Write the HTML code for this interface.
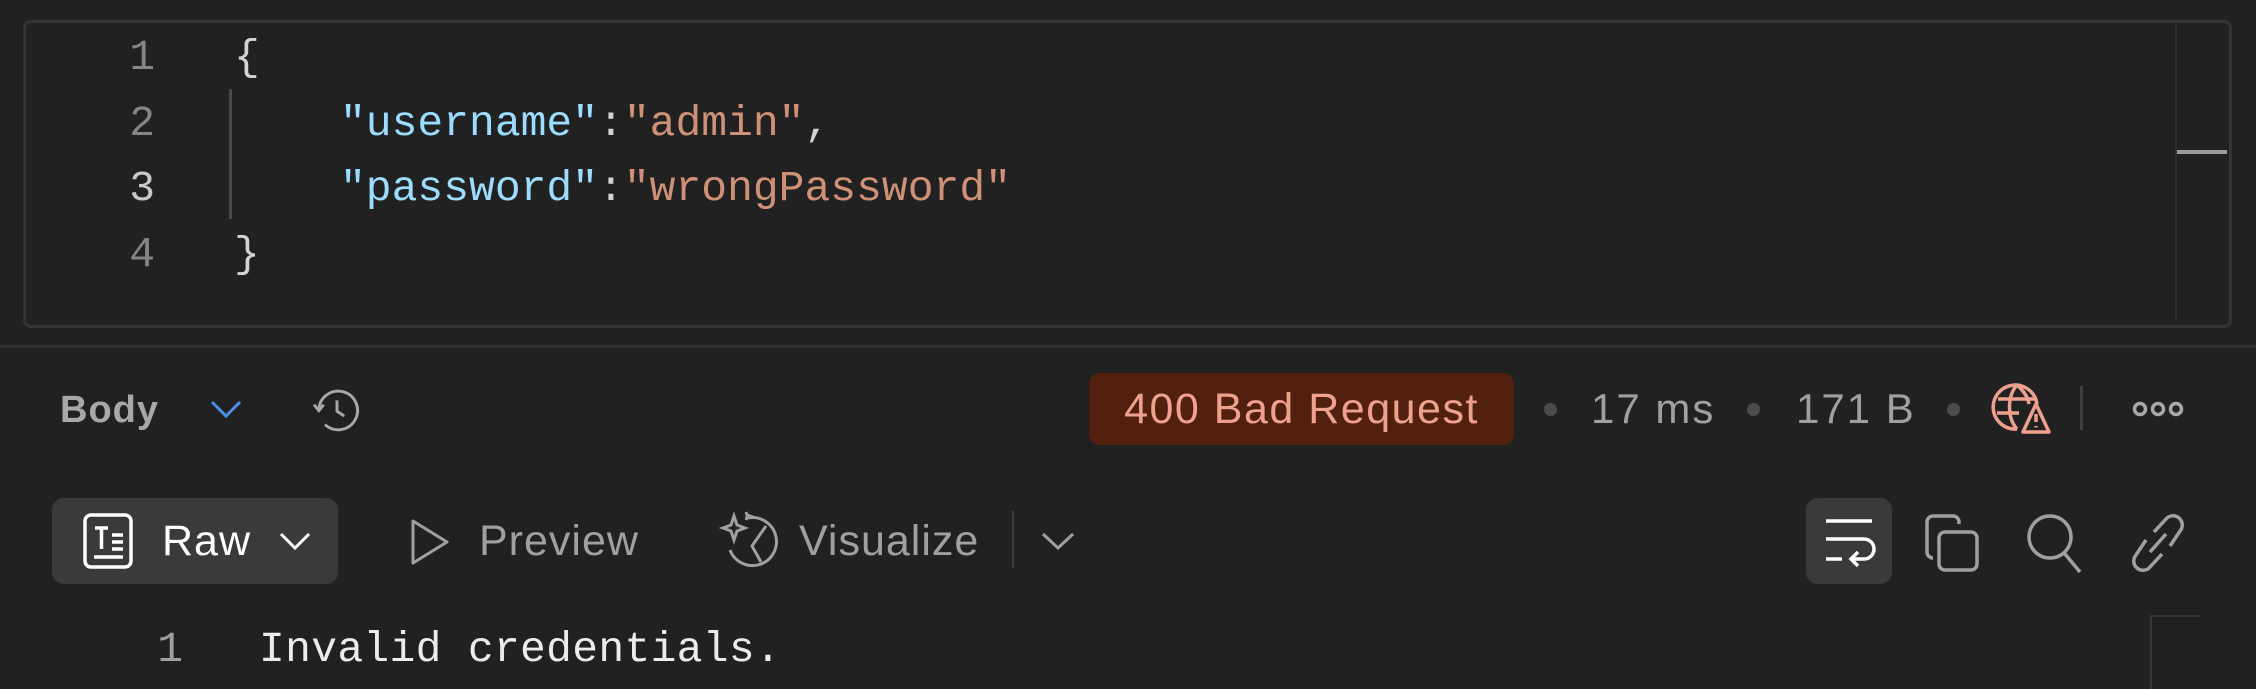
<!DOCTYPE html>
<html><head><meta charset="utf-8"><style>
html,body{margin:0;padding:0;background:#212121;width:2256px;height:689px;overflow:hidden;position:relative;font-family:"Liberation Sans",sans-serif}
.a{position:absolute}
.mono{font-family:"Liberation Mono",monospace;font-size:43px;line-height:66px;white-space:pre}
.ln{color:#858585;text-align:right;width:60px}
.s{font-size:40px;line-height:50px;white-space:nowrap;letter-spacing:1px}
svg{position:absolute;overflow:visible}
</style></head><body>
<div class="a" style="left:23px;top:20px;width:2203px;height:302px;border:3px solid #343434;border-radius:8px"></div>
<div class="a" style="left:2175px;top:23px;width:2px;height:299px;background:#2e2e2e"></div>
<div class="a" style="left:2177px;top:150px;width:50px;height:4px;background:#9a9a9a"></div>
<div class="a" style="left:229px;top:89px;width:3px;height:130px;background:#4a4a4a"></div>
<div class="a mono ln" style="left:95px;top:25px">1</div>
<div class="a mono ln" style="left:95px;top:91px">2</div>
<div class="a mono ln" style="left:95px;top:156px;color:#c8c8c8">3</div>
<div class="a mono ln" style="left:95px;top:222px">4</div>
<div class="a mono" style="left:234px;top:25px;color:#d4d4d4">{</div>
<div class="a mono" style="left:340px;top:91px"><span style="color:#9cdcfe">"username"</span><span style="color:#d4d4d4">:</span><span style="color:#ce9178">"admin"</span><span style="color:#d4d4d4">,</span></div>
<div class="a mono" style="left:340px;top:156px"><span style="color:#9cdcfe">"password"</span><span style="color:#d4d4d4">:</span><span style="color:#ce9178">"wrongPassword"</span></div>
<div class="a mono" style="left:234px;top:222px;color:#d4d4d4">}</div>
<div class="a" style="left:0;top:345px;width:2256px;height:3px;background:#2f2f2f"></div>

<div class="a s" style="left:60px;top:385px;color:#a8a8a8;font-weight:bold;font-size:38px">Body</div>
<svg style="left:209px;top:398px" width="34" height="22"><path d="M3 4 L17 18 L31 4" fill="none" stroke="#4b8fe6" stroke-width="3"/></svg>
<svg style="left:306px;top:381px" width="62" height="58" viewBox="0 0 24 24"><path d="M4.5 12 A8 8 0 1 1 7 18" fill="none" stroke="#a8a8a8" stroke-width="1.2"/><path d="M2.5 9.8 L4.5 12.3 L6.5 9.8" fill="none" stroke="#a8a8a8" stroke-width="1.2"/><path d="M12 8 V12.5 L15 14.5" fill="none" stroke="#a8a8a8" stroke-width="1.2"/></svg>

<div class="a" style="left:1089px;top:373px;width:425px;height:72px;background:#52200f;border-radius:11px"></div>
<div class="a s" style="left:1089px;top:384px;width:425px;text-align:center;color:#f0a18e;font-size:43px;letter-spacing:1.5px">400 Bad Request</div>
<div class="a" style="left:1544px;top:403px;width:13px;height:13px;border-radius:50%;background:#4a4a4a"></div>
<div class="a s" style="left:1591px;top:384px;color:#a0a0a0;font-size:42px;letter-spacing:2px">17 ms</div>
<div class="a" style="left:1747px;top:403px;width:13px;height:13px;border-radius:50%;background:#4a4a4a"></div>
<div class="a s" style="left:1796px;top:384px;color:#a0a0a0;font-size:42px;letter-spacing:2px">171 B</div>
<div class="a" style="left:1947px;top:403px;width:13px;height:13px;border-radius:50%;background:#4a4a4a"></div>
<svg style="left:1993px;top:382px" width="60" height="56" viewBox="0 0 60 56"><g fill="none" stroke="#ef9f8e" stroke-width="3.5"><path d="M44 22 A22 22 0 1 0 24 47"/><path d="M24 3 C14 14 14 36 24 47"/><path d="M24 3 C32 10 35 16 36 22"/><path d="M5 17 H43"/><path d="M4 31 H26"/><path d="M43 22 L56 50 H30 Z" stroke-linejoin="round"/><path d="M43 32 V40"/><path d="M43 44 V45.5"/></g></svg>
<div class="a" style="left:2080px;top:386px;width:3px;height:44px;background:#3e3e3e"></div>
<svg style="left:2132px;top:400px" width="52" height="18"><g fill="none" stroke="#a8a8a8" stroke-width="3.5"><circle cx="8" cy="9" r="5.5"/><circle cx="26" cy="9" r="5.5"/><circle cx="44" cy="9" r="5.5"/></g></svg>

<div class="a" style="left:52px;top:498px;width:286px;height:86px;background:#3a3a3a;border-radius:12px"></div>
<svg style="left:83px;top:513px" width="52" height="56" viewBox="0 0 52 56"><g fill="none" stroke="#fff" stroke-width="3.5"><rect x="2" y="2" width="46" height="52" rx="6"/><path d="M12 15 H25 M18.5 15 V36 M29 22 H40 M29 29 H40 M29 36 H40 M11 44 H40"/></g></svg>
<div class="a s" style="left:162px;top:516px;color:#fff;font-size:43px">Raw</div>
<svg style="left:278px;top:530px" width="34" height="22"><path d="M3 4 L17 18 L31 4" fill="none" stroke="#fff" stroke-width="3"/></svg>
<svg style="left:410px;top:518px" width="40" height="48"><path d="M3 3 L37 24 L3 45 Z" fill="none" stroke="#a0a0a0" stroke-width="3" stroke-linejoin="round"/></svg>
<div class="a s" style="left:479px;top:516px;color:#a0a0a0;font-size:43px">Preview</div>
<svg style="left:718px;top:510px" width="62" height="62" viewBox="0 0 62 62"><g fill="none" stroke="#a0a0a0" stroke-width="3"><path d="M30 8 A24 24 0 1 1 12 40"/><path d="M48 16 L34 36 L43 52"/><path d="M16 6 L19 15 L27 18 L19 21 L16 30 L13 21 L5 18 L13 15 Z"/><path d="M28 2 L29 5 L32 6 L29 7 L28 10"/></g></svg>
<div class="a s" style="left:799px;top:516px;color:#a0a0a0;font-size:43px">Visualize</div>
<div class="a" style="left:1012px;top:511px;width:2px;height:57px;background:#3e3e3e"></div>
<svg style="left:1040px;top:530px" width="36" height="22"><path d="M3 4 L18 18 L33 4" fill="none" stroke="#a0a0a0" stroke-width="3"/></svg>

<div class="a" style="left:1806px;top:498px;width:86px;height:86px;background:#3a3a3a;border-radius:12px"></div>
<svg style="left:1824px;top:518px" width="52" height="50"><g fill="none" stroke="#fff" stroke-width="3.5"><path d="M2 3 H48"/><path d="M2 21 H40 A10 10 0 0 1 40 41 H28"/><path d="M34 34 L27 41 L34 48"/><path d="M2 41 H18"/></g></svg>
<svg style="left:1925px;top:514px" width="56" height="58"><g fill="none" stroke="#a0a0a0" stroke-width="3.5"><path d="M14 2 H8 A6 6 0 0 0 2 8 V38 A6 6 0 0 0 8 44"/><path d="M14 2 H28 A6 6 0 0 1 34 8 V10"/><rect x="14" y="18" width="38" height="38" rx="6"/></g></svg>
<svg style="left:2026px;top:512px" width="58" height="62"><g fill="none" stroke="#a0a0a0" stroke-width="3.5"><circle cx="24" cy="25" r="21"/><path d="M39 42 L54 60"/></g></svg>
<svg style="left:2130px;top:514px" width="56" height="58"><g fill="none" stroke="#a0a0a0" stroke-width="3.5"><path d="M24 18 L36 5 A8.5 8.5 0 0 1 50 17 L40 32"/><path d="M32 40 L20 53 A8.5 8.5 0 0 1 6 41 L16 26"/><path d="M20 38 L36 20"/></g></svg>

<div class="a mono" style="left:118px;top:617px;color:#a0a0a0;width:65px;text-align:right">1</div>
<div class="a mono" style="left:259px;top:617px;color:#ececec;letter-spacing:0.3px">Invalid credentials.</div>
<div class="a" style="left:2150px;top:615px;width:2px;height:74px;background:#353535"></div>
<div class="a" style="left:2150px;top:615px;width:50px;height:2px;background:#353535"></div>
</body></html>
